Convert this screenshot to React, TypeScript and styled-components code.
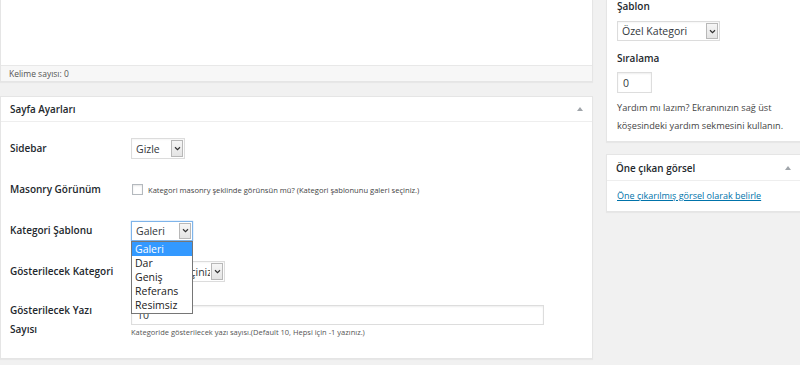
import React from "react";
import styled, { createGlobalStyle } from "styled-components";

const Global = createGlobalStyle`
  html, body { margin: 0; padding: 0; }
  body {
    background: #f1f1f1;
    font-family: "Open Sans", "Noto Sans", sans-serif;
    color: #32373c;
    width: 800px;
    height: 365px;
    overflow: hidden;
  }
`;

const Page = styled.div`
  display: flex;
  align-items: flex-start;
  width: 800px;
  height: 365px;
  overflow: hidden;
`;

const LeftCol = styled.div`
  width: 593px;
  flex: none;
  display: flex;
  flex-direction: column;
`;

const RightCol = styled.div`
  width: 195px;
  flex: none;
  margin-left: 13px;
  display: flex;
  flex-direction: column;
  gap: 12px;
`;

const EditorBox = styled.div`
  background: #fff;
  border: 1px solid #e5e5e5;
  border-top: none;
  box-shadow: 0 1px 1px rgba(0, 0, 0, 0.04);
`;

const EditorArea = styled.div`
  height: 65px;
`;

const StatusBar = styled.div`
  height: 15px;
  background: #f7f7f7;
  border-top: 1px solid #e8e8e8;
  font-size: 8.5px;
  line-height: 15px;
  color: #555;
  padding-left: 8px;
`;

const Panel = styled.div<{ $mt?: number }>`
  background: #fff;
  border: 1px solid #e5e5e5;
  box-shadow: 0 1px 1px rgba(0, 0, 0, 0.04);
  margin-top: ${(p) => p.$mt ?? 0}px;
`;

const PanelHeader = styled.div<{ $h: number }>`
  height: ${(p) => p.$h}px;
  border-bottom: 1px solid #eee;
  display: flex;
  align-items: center;
  justify-content: space-between;
  padding: 0 9px 0 9px;
`;

const PanelTitle = styled.div`
  font-size: 9.9px;
  font-weight: 600;
  color: #23282d;
`;

const Toggle = styled.span`
  width: 0;
  height: 0;
  border-left: 3.5px solid transparent;
  border-right: 3.5px solid transparent;
  border-bottom: 4px solid #a0a5aa;
`;

const FormBody = styled.div`
  padding: 6px 0 0 0;
  height: 230px;
`;

const Row = styled.div<{ $h?: number; $top?: boolean }>`
  display: grid;
  grid-template-columns: 130px 1fr;
  align-items: ${(p) => (p.$top ? "start" : "center")};
  height: ${(p) => (p.$h ? `${p.$h}px` : "auto")};
  padding-top: ${(p) => (p.$top ? 9 : 0)}px;
`;

const Label = styled.div`
  font-size: 10px;
  font-weight: 600;
  color: #23282d;
  padding-left: 9px;
  line-height: 19px;
`;

const Field = styled.div`
  display: flex;
  flex-direction: column;
  align-items: flex-start;
`;

const SelectWrap = styled.div`
  position: relative;
`;

const SelectBox = styled.div<{ $w: number; $focus?: boolean; $h?: number }>`
  width: ${(p) => p.$w}px;
  height: ${(p) => p.$h ?? 21}px;
  box-sizing: border-box;
  border: 1px solid ${(p) => (p.$focus ? "#7eb4ea" : "#dcdcdc")};
  box-shadow: ${(p) => (p.$focus ? "0 0 1px #7eb4ea" : "inset 0 1px 2px rgba(0,0,0,0.04)")};
  background: #fff;
  display: flex;
  align-items: stretch;
  font-size: 10.5px;
  color: #32373c;
  overflow: hidden;
`;

const SelectText = styled.div`
  flex: 1;
  padding-left: 4px;
  display: flex;
  align-items: center;
  white-space: nowrap;
  overflow: hidden;
`;

const ArrowBox = styled.div`
  width: 12px;
  margin: 1px;
  box-sizing: border-box;
  border: 1px solid #b8b8b8;
  background: linear-gradient(#f6f6f6, #e4e4e4);
  display: flex;
  align-items: center;
  justify-content: center;
  color: #333;
`;

const Chevron = () => (
  <svg width="7" height="5" viewBox="0 0 7 5">
    <path d="M1 1.2 L3.5 3.6 L6 1.2" fill="none" stroke="#333" strokeWidth="1.2" />
  </svg>
);

const Select: React.FC<{ w: number; text: string; focus?: boolean; h?: number }> = ({ w, text, focus, h }) => (
  <SelectBox $w={w} $focus={focus} $h={h}>
    <SelectText>{text}</SelectText>
    <ArrowBox>
      <Chevron />
    </ArrowBox>
  </SelectBox>
);

const DropList = styled.div`
  position: absolute;
  left: 0;
  top: 100%;
  width: 62px;
  box-sizing: border-box;
  border: 1px solid #767676;
  background: #fff;
  z-index: 5;
  padding-bottom: 1px;
`;

const DropItem = styled.div<{ $active?: boolean }>`
  height: 14px;
  line-height: 14px;
  font-size: 10.5px;
  padding-left: 3px;
  background: ${(p) => (p.$active ? "#3399ff" : "transparent")};
  color: ${(p) => (p.$active ? "#fff" : "#222")};
`;

const CheckLine = styled.label`
  display: flex;
  align-items: center;
  gap: 5px;
  font-size: 7.6px;
  color: #444;
`;

const CheckBoxMark = styled.span`
  width: 9px;
  height: 9px;
  border: 1px solid #b4b9be;
  background: #fff;
  box-shadow: inset 0 1px 2px rgba(0, 0, 0, 0.1);
  margin-left: 1px;
`;

const TextInput = styled.div<{ $w: number; $h: number; $fs: number; $mt?: number }>`
  width: ${(p) => p.$w}px;
  height: ${(p) => p.$h}px;
  margin-top: ${(p) => p.$mt ?? 0}px;
  box-sizing: border-box;
  border: 1px solid #ddd;
  box-shadow: inset 0 1px 2px rgba(0, 0, 0, 0.07);
  background: #fff;
  font-size: ${(p) => p.$fs}px;
  color: #32373c;
  padding-left: 5px;
  display: flex;
  align-items: center;
`;

const Desc = styled.div`
  font-size: 7.5px;
  color: #555;
  margin-top: 2px;
`;

const SideBox = styled.div<{ $noTop?: boolean }>`
  background: #fff;
  border: 1px solid #e5e5e5;
  border-top: ${(p) => (p.$noTop ? "none" : "1px solid #e5e5e5")};
  box-shadow: 0 1px 1px rgba(0, 0, 0, 0.04);
`;

const SideTopBody = styled.div`
  padding: 0 10px 6px 10px;
  display: flex;
  flex-direction: column;
  align-items: flex-start;
`;

const SideLabel = styled.div<{ $mt?: number }>`
  font-size: 10px;
  font-weight: 600;
  color: #23282d;
  line-height: 12px;
  margin-top: ${(p) => p.$mt ?? 0}px;
`;

const Spacer = styled.div<{ $mt: number }>`
  margin-top: ${(p) => p.$mt}px;
`;

const HelpText = styled.p`
  margin: 6px 0 0 0;
  font-size: 9.2px;
  line-height: 18px;
  color: #444;
`;

const SideBody = styled.div`
  padding: 7px 10px 8px 10px;
  font-size: 9px;
  line-height: 15px;
`;

const Link = styled.a`
  font-size: 9px;
  color: #0073aa;
  text-decoration: underline;
  line-height: 15px;
`;

export default function App() {
  return (
    <>
      <Global />
      <Page>
        <LeftCol>
          <EditorBox>
            <EditorArea />
            <StatusBar>Kelime sayısı: 0</StatusBar>
          </EditorBox>
          <Panel $mt={14}>
            <PanelHeader $h={24}>
              <PanelTitle>Sayfa Ayarları</PanelTitle>
              <Toggle />
            </PanelHeader>
            <FormBody>
              <Row $h={41}>
                <Label>Sidebar</Label>
                <Field>
                  <Select w={54} text="Gizle" />
                </Field>
              </Row>
              <Row $h={41}>
                <Label>Masonry Görünüm</Label>
                <Field>
                  <CheckLine>
                    <CheckBoxMark />
                    Kategori masonry şeklinde görünsün mü? (Kategori şablonunu galeri seçiniz.)
                  </CheckLine>
                </Field>
              </Row>
              <Row $h={41}>
                <Label>Kategori Şablonu</Label>
                <Field>
                  <SelectWrap>
                    <Select w={62} h={20} text="Galeri" focus />
                    <DropList>
                      <DropItem $active>Galeri</DropItem>
                      <DropItem>Dar</DropItem>
                      <DropItem>Geniş</DropItem>
                      <DropItem>Referans</DropItem>
                      <DropItem>Resimsiz</DropItem>
                    </DropList>
                  </SelectWrap>
                </Field>
              </Row>
              <Row $h={41}>
                <Label>Gösterilecek Kategori</Label>
                <Field>
                  <Select w={94} text="Kategori seçiniz" />
                </Field>
              </Row>
              <Row $top>
                <Label>
                  Gösterilecek Yazı
                  <br />
                  Sayısı
                </Label>
                <Field>
                  <TextInput $w={413} $h={20} $fs={10.5} $mt={4}>
                    10
                  </TextInput>
                  <Desc>Kategoride gösterilecek yazı sayısı.(Default 10, Hepsi için -1 yazınız.)</Desc>
                </Field>
              </Row>
            </FormBody>
          </Panel>
        </LeftCol>
        <RightCol>
          <SideBox $noTop>
            <SideTopBody>
              <SideLabel>Şablon</SideLabel>
              <Spacer $mt={9}>
                <Select w={103} h={20} text="Özel Kategori" />
              </Spacer>
              <SideLabel $mt={11}>Sıralama</SideLabel>
              <Spacer $mt={8}>
                <TextInput $w={35} $h={21} $fs={10.5}>
                  0
                </TextInput>
              </Spacer>
              <HelpText>
                Yardım mı lazım? Ekranınızın sağ üst
                <br />
                köşesindeki yardım sekmesini kullanın.
              </HelpText>
            </SideTopBody>
          </SideBox>
          <SideBox>
            <PanelHeader $h={25}>
              <PanelTitle>Öne çıkan görsel</PanelTitle>
              <Toggle />
            </PanelHeader>
            <SideBody>
              <Link href="#">Öne çıkarılmış görsel olarak belirle</Link>
            </SideBody>
          </SideBox>
        </RightCol>
      </Page>
    </>
  );
}
